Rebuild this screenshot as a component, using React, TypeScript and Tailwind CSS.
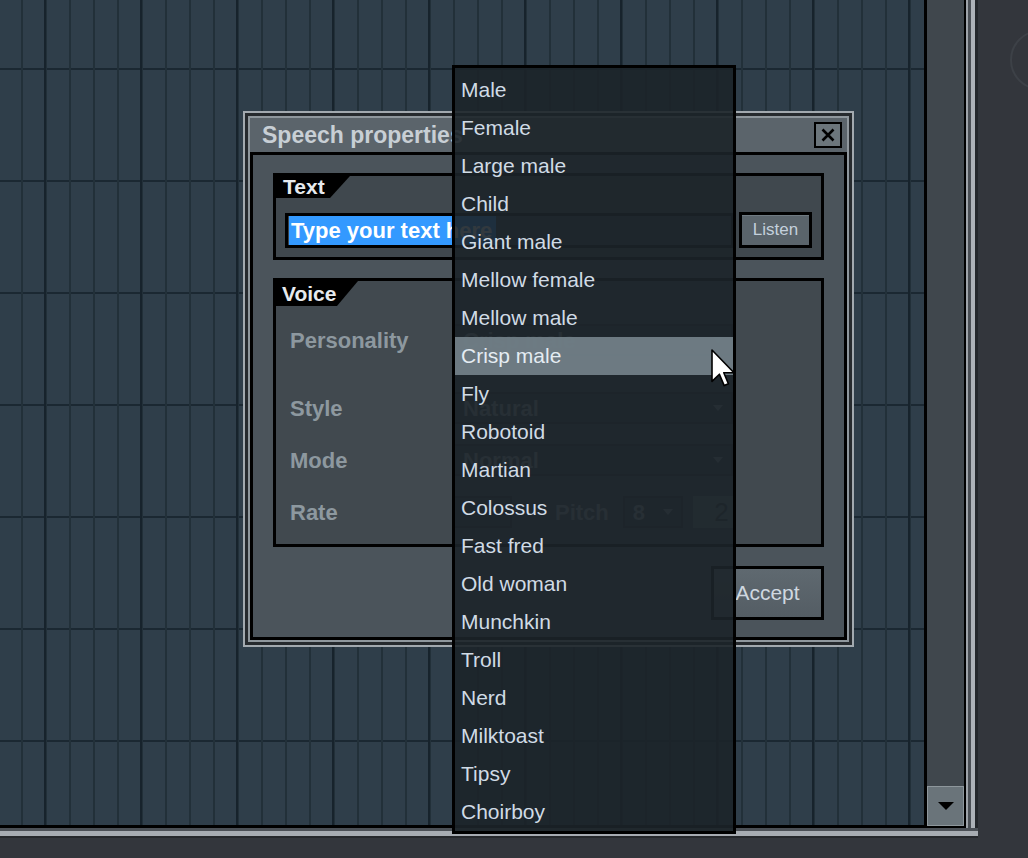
const voices = [
  'Male',
  'Female',
  'Large male',
  'Child',
  'Giant male',
  'Mellow female',
  'Mellow male',
  'Crisp male',
  'Fly',
  'Robotoid',
  'Martian',
  'Colossus',
  'Fast fred',
  'Old woman',
  'Munchkin',
  'Troll',
  'Nerd',
  'Milktoast',
  'Tipsy',
  'Choirboy',
]

function Caret() {
  return (
    <svg width="10" height="6" viewBox="0 0 10 6">
      <path d="M0 0h10L5 6z" fill="#7d878e" />
    </svg>
  )
}

function Select({ value, width }: { value: string; width: string }) {
  return (
    <div
      className={`flex h-[32px] ${width} items-center justify-between border-2 border-[#2a3035] bg-[#394147] px-[8px] text-[22px] font-bold text-[#8d989f]`}
    >
      <span>{value}</span>
      <Caret />
    </div>
  )
}

export default function App() {
  return (
    <div className="relative h-[858px] w-[1028px] overflow-hidden bg-[#33363c] font-['Liberation_Sans',Arial,sans-serif]">
      {/* main window: playlist grid + scrollbar */}
      <div className="flex w-[978px] flex-col">
        <div className="flex h-[828px]">
          <div className="w-[927px] border-r-[3px] border-b-[3px] border-black bg-[#2f3e4a] [background-image:linear-gradient(90deg,#17232c_0,#17232c_2px,transparent_2px),linear-gradient(90deg,#223039_0,#223039_2px,transparent_2px),linear-gradient(180deg,#1b2832_0,#1b2832_2px,transparent_2px)] [background-size:96px_100%,24px_100%,100%_112px] [background-position:44px_0,21px_0,0_68px]" />
          <div className="flex w-[37px] flex-col border-b-2 border-black bg-[#40474d]">
            <div className="flex-1" />
            <div className="flex h-[40px] items-center justify-center border border-[#8e979c] bg-[#6a747a]">
              <svg width="16" height="8" viewBox="0 0 16 8">
                <path d="M0 0h16L8 8z" fill="#000" />
              </svg>
            </div>
          </div>
          <div className="flex w-[14px]">
            <div className="w-[2px] bg-black" />
            <div className="w-[2px] bg-[#9ea3a9]" />
            <div className="w-[3px] bg-[#4a4f55]" />
            <div className="w-[4px] bg-[#adb2b8]" />
            <div className="w-[3px] bg-[#24272b]" />
          </div>
        </div>
        <div className="h-[3px] bg-[#4b5056]" />
        <div className="h-[5px] bg-[#a7acb2]" />
        <div className="h-[2px] bg-[#25282c]" />
      </div>

      {/* faint knob at the right edge */}
      <div className="absolute left-[1010px] top-[30px] h-[60px] w-[60px] rounded-full border-2 border-[#3d4147]" />

      {/* Speech properties dialog */}
      <div className="absolute left-[243px] top-[111px] w-[611px] border-2 border-[#a2a9af] bg-[#4b545b]">
        <div className="border-[3px] border-[#262a2e]">
          <div className="border-2 border-[#8f979d]">
            <div className="flex h-[34px] items-center justify-between bg-[#5b646b] pl-[12px] pr-[5px]">
              <span className="text-[23px] font-bold text-[#c8cfd5]">Speech properties</span>
              <div className="flex h-[26px] w-[28px] items-center justify-center border-2 border-black bg-[#6c767c]">
                <svg width="14" height="14" viewBox="0 0 14 14">
                  <path d="M1.5 1.5l11 11M12.5 1.5l-11 11" stroke="#000" strokeWidth="2.6" />
                </svg>
              </div>
            </div>

            <div className="border-[3px] border-black bg-[#4b545b] px-[20px] pt-[18px] pb-[17px]">
              {/* Text group */}
              <div className="border-[3px] border-black bg-[#40484e]">
                <div className="flex h-[22px] w-[74px] items-end bg-black pl-[7px] text-[21px] leading-[22px] font-bold text-[#e6eaee] [clip-path:polygon(0_0,100%_0,calc(100%-20px)_100%,0_100%)]">
                  Text
                </div>
                <div className="mt-[14px] flex items-center gap-[5px] px-[9px] pb-[9px]">
                  <div className="flex h-[35px] flex-1 items-center border-[3px] border-black bg-[#3a4248] px-px">
                    <span className="flex h-full items-center bg-[#3399ff] pl-[2px] pr-[4px] text-[22px] font-bold text-white">
                      Type your text here
                    </span>
                  </div>
                  <div className="flex h-[36px] w-[73px] items-center justify-center border-[3px] border-black bg-[#5a646b] text-[17px] text-[#c4d0dc] shadow-[inset_0_1px_0_#6f7a81]">
                    Listen
                  </div>
                </div>
              </div>

              {/* Voice group */}
              <div className="mt-[18px] border-[3px] border-black bg-[#41494f]">
                <div className="flex h-[25px] w-[82px] items-end bg-black pl-[6px] text-[21px] leading-[24px] font-bold text-[#e6eaee] [clip-path:polygon(0_0,100%_0,calc(100%-21px)_100%,0_100%)]">
                  Voice
                </div>
                <div className="flex flex-col pt-[16px] pb-[14px] pl-[14px] text-[22px] font-bold text-[#8d989f]">
                  <div className="flex h-[36px] items-center">
                    <span className="w-[163px]">Personality</span>
                    <Select value="Crisp male" width="w-[280px]" />
                  </div>
                  <div className="mt-[32px] flex h-[36px] items-center">
                    <span className="w-[163px]">Style</span>
                    <Select value="Natural" width="w-[280px]" />
                  </div>
                  <div className="mt-[16px] flex h-[36px] items-center">
                    <span className="w-[163px]">Mode</span>
                    <Select value="Normal" width="w-[280px]" />
                  </div>
                  <div className="mt-[16px] flex h-[36px] items-center">
                    <span className="w-[163px]">Rate</span>
                    <div className="h-[32px] w-[59px] border-2 border-[#2a3035] bg-[#394147]" />
                    <span className="ml-[43px]">Pitch</span>
                    <div className="ml-[14px]">
                      <Select value="8" width="w-[60px]" />
                    </div>
                    <div className="ml-[10px] flex h-[32px] w-[40px] items-center justify-end bg-[#5d6d72] pr-[4px] text-[26px] font-normal text-[#2b3337]">
                      2
                    </div>
                  </div>
                </div>
              </div>

              <div className="mt-[19px] flex justify-end">
                <div className="flex h-[54px] w-[113px] items-center justify-center border-[3px] border-black bg-[linear-gradient(180deg,#5f6970,#545d64)] text-[21px] text-[#cfd8e0]">
                  Accept
                </div>
              </div>
            </div>
          </div>
        </div>
      </div>

      {/* open personality list */}
      <div className="absolute left-[452px] top-[65px] w-[284px] border-[3px] border-black bg-[rgba(28,35,41,0.9)] pt-[3px]">
        {voices.map((v) => (
          <div
            key={v}
            className={
              v === 'Crisp male'
                ? 'flex h-[38px] items-center bg-[rgba(117,132,140,0.9)] pl-[6px] text-[21px] text-[#e4ecf2]'
                : 'flex h-[38px] items-center pl-[6px] text-[21px] text-[#d0dbe5]'
            }
          >
            {v}
          </div>
        ))}
      </div>

      {/* mouse pointer */}
      <svg className="absolute left-[711px] top-[349px]" width="24" height="38" viewBox="0 0 12 19">
        <path
          d="M0.5 0.5V16.2L4.2 12.6L6.6 18.3L8.7 17.4L6.4 11.9H11.5Z"
          fill="#fff"
          stroke="#000"
          strokeWidth="0.8"
          strokeLinejoin="round"
        />
      </svg>
    </div>
  )
}
